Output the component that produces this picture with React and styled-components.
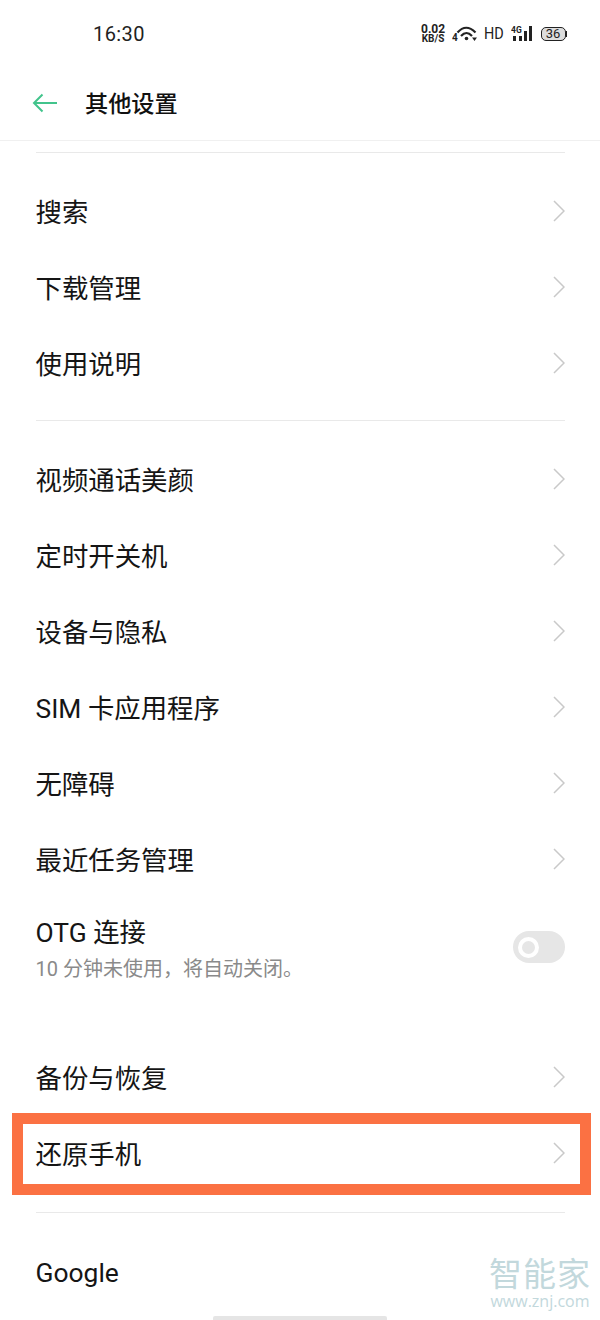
import React from 'react';
import styled, { createGlobalStyle } from 'styled-components';

const GlobalStyle = createGlobalStyle`
  html, body {
    margin: 0;
    padding: 0;
    background: #fff;
  }
  body {
    font-family: "Roboto", "Noto Sans CJK SC", sans-serif;
  }
`;

const groups = [
  ['搜索', '下载管理', '使用说明'],
  ['视频通话美颜', '定时开关机', '设备与隐私', 'SIM 卡应用程序', '无障碍', '最近任务管理'],
];

function Chevron() {
  return (
    <ChevronIcon width="12" height="22" viewBox="0 0 12 22">
      <path d="M1 1 L11 11 L1 21" fill="none" stroke="#c9c9c9" strokeWidth="1.5" />
    </ChevronIcon>
  );
}

function Row({ label, highlighted }) {
  return (
    <RowBox>
      <Label>{label}</Label>
      <Chevron />
      {highlighted && <Highlight />}
    </RowBox>
  );
}

function App() {
  return (
    <Page>
      <GlobalStyle />
      <StatusBar>
        <Time>16:30</Time>
        <StatusIcons>
          <Speed>
            <SpeedValue>0.02</SpeedValue>
            <SpeedUnit>KB/S</SpeedUnit>
          </Speed>
          <svg width="25" height="17" viewBox="0 0 25 17">
            <path d="M5.5 7.5 Q14 -2 23.5 7.5" fill="none" stroke="#222" strokeWidth="2.2" />
            <path d="M9 11 Q14.5 5 20 11" fill="none" stroke="#222" strokeWidth="2.2" />
            <circle cx="14.5" cy="13.5" r="1.8" fill="#222" />
            <path d="M20 12.5 h5 l-2.5 3.5 z" fill="#222" />
            <text x="0" y="16" fontSize="10" fontWeight="700" fill="#222" fontFamily="Roboto">4</text>
          </svg>
          <Hd>HD</Hd>
          <svg width="22" height="17" viewBox="0 0 22 17">
            <text x="0" y="8" fontSize="8.5" fontWeight="700" fill="#222" fontFamily="Roboto">4G</text>
            <rect x="2" y="11" width="3" height="5" fill="#222" />
            <rect x="8" y="11" width="3" height="5" fill="#222" />
            <rect x="13" y="6" width="3" height="10" fill="#222" />
            <rect x="18" y="1" width="3" height="15" fill="#222" />
          </svg>
          <Battery>
            <BatteryBody>36</BatteryBody>
            <BatteryTip />
          </Battery>
        </StatusIcons>
      </StatusBar>

      <Header>
        <svg width="26" height="20" viewBox="0 0 26 20">
          <path d="M25 10 H2 M10.5 1.5 L2 10 L10.5 18.5" fill="none" stroke="#42c48c" strokeWidth="2" />
        </svg>
        <Title>其他设置</Title>
      </Header>

      <Divider />
      <Group>
        {groups[0].map(label => <Row label={label} key={label} />)}
      </Group>

      <Divider />
      <Group>
        {groups[1].map(label => <Row label={label} key={label} />)}
        <ToggleRow>
          <ToggleText>
            <Label>OTG 连接</Label>
            <SubLabel>10 分钟未使用，将自动关闭。</SubLabel>
          </ToggleText>
          <Switch><Knob /></Switch>
        </ToggleRow>
      </Group>

      <LastGroup>
        <Row label="备份与恢复" />
        <Row label="还原手机" highlighted />
      </LastGroup>

      <Divider />
      <Group>
        <RowBox>
          <Label>Google</Label>
        </RowBox>
      </Group>

      <Watermark>
        <WatermarkName>智能家</WatermarkName>
        <WatermarkUrl>www.znj.com</WatermarkUrl>
      </Watermark>
      <HomeBar />
    </Page>
  );
}

const Page = styled.div`
  position: relative;
  width: 600px;
  height: 1320px;
  overflow: hidden;
  background: #fff;
  color: #111;
`;

const StatusBar = styled.div`
  height: 66px;
  display: flex;
  align-items: center;
  justify-content: space-between;
  padding: 1px 33px 0 93px;
  box-sizing: border-box;
`;

const Time = styled.div`
  font-size: 20px;
  color: #222;
  letter-spacing: 0.4px;
`;

const StatusIcons = styled.div`
  display: flex;
  align-items: center;
  gap: 6px;
`;

const Speed = styled.div`
  display: flex;
  flex-direction: column;
  align-items: center;
  width: 25px;
  color: #222;
  font-weight: 700;
`;

const SpeedValue = styled.div`
  font-size: 12px;
  line-height: 10px;
`;

const SpeedUnit = styled.div`
  font-size: 10px;
  line-height: 9px;
`;

const Hd = styled.div`
  font-size: 16px;
  color: #222;
  transform: scaleX(0.9);
`;

const Battery = styled.div`
  display: flex;
  align-items: center;
  margin-left: 2px;
`;

const BatteryBody = styled.div`
  width: 23px;
  height: 12px;
  border: 1.5px solid #222;
  border-radius: 5px;
  background: #ddd;
  font-size: 13px;
  line-height: 12px;
  text-align: center;
  color: #222;
`;

const BatteryTip = styled.div`
  width: 1.5px;
  height: 6px;
  background: #222;
`;

const Header = styled.div`
  height: 75px;
  display: flex;
  align-items: center;
  gap: 27px;
  padding: 0 0 1px 32px;
  margin-bottom: 11px;
  border-bottom: 1px solid #f0f0f0;
  box-sizing: border-box;
`;

const Title = styled.div`
  font-size: 23.2px;
  font-weight: 500;
  color: #111;
  margin-bottom: 2px;
`;

const Divider = styled.div`
  height: 1px;
  margin: 0 35px 0 36px;
  background: #e9e9e9;
`;

const Group = styled.div`
  padding: 21px 0 18px;
`;

const LastGroup = styled(Group)`
  padding: 26px 0 20px;
`;

const RowBox = styled.div`
  position: relative;
  height: 76px;
  display: flex;
  align-items: center;
  justify-content: space-between;
  padding: 0 35px 0 35.5px;
`;

const Label = styled.div`
  font-size: 26.4px;
  line-height: 34px;
  padding-top: 2px;
  color: #151515;
`;

const ChevronIcon = styled.svg`
  display: block;
  margin-bottom: 2px;
`;

const Highlight = styled.div`
  position: absolute;
  left: 12px;
  right: 9px;
  top: -3px;
  bottom: -3px;
  border: 11px solid #fb7143;
`;

const ToggleRow = styled.div`
  height: 98px;
  display: flex;
  align-items: center;
  justify-content: space-between;
  padding: 0 35px 0 35.5px;
`;

const ToggleText = styled.div`
  display: flex;
  flex-direction: column;
  gap: 6px;
  padding-top: 2px;
`;

const SubLabel = styled.div`
  font-size: 20px;
  line-height: 26px;
  color: #8a8a8a;
`;

const Switch = styled.div`
  width: 52px;
  height: 32px;
  border-radius: 16px;
  background: #e6e6e6;
  display: flex;
  align-items: center;
  padding-left: 5px;
  box-sizing: border-box;
`;

const Knob = styled.div`
  width: 21px;
  height: 21px;
  border: 4px solid #fff;
  border-radius: 50%;
  box-sizing: border-box;
`;

const Watermark = styled.div`
  position: absolute;
  left: 488px;
  top: 1256px;
  width: 104px;
  display: flex;
  flex-direction: column;
  align-items: center;
  color: #c2d8dc;
`;

const WatermarkName = styled.div`
  font-size: 33px;
  line-height: 37px;
  letter-spacing: 1px;
  white-space: nowrap;
`;

const WatermarkUrl = styled.div`
  font-family: "Open Sans", sans-serif;
  font-size: 16px;
  line-height: 17px;
  white-space: nowrap;
`;

const HomeBar = styled.div`
  position: absolute;
  left: 213px;
  bottom: 0;
  width: 174px;
  height: 4px;
  border-radius: 2px 2px 0 0;
  background: #e5e5e5;
`;

export default App;
